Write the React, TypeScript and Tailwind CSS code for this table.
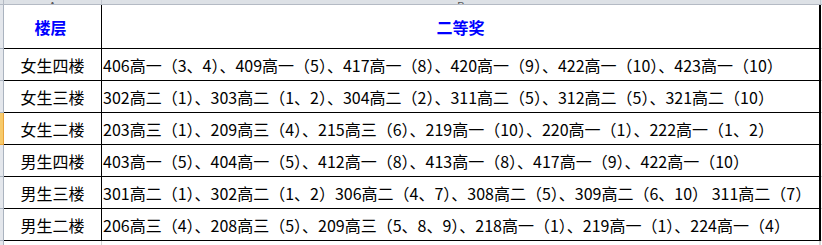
import React from "react";

const rows: { floor: string; text: string; sel?: boolean }[] = [
  { floor: "女生四楼", text: "406高一（3、4）、409高一（5）、417高一（8）、420高一（9）、422高一（10）、423高一（10）" },
  { floor: "女生三楼", text: "302高二（1）、303高二（1、2）、304高二（2）、311高二（5）、312高二（5）、321高二（10）" },
  { floor: "女生二楼", text: "203高三（1）、209高三（4）、215高三（6）、219高一（10）、220高一（1）、222高一（1、2）", sel: true },
  { floor: "男生四楼", text: "403高一（5）、404高一（5）、412高一（8）、413高一（8）、417高一（9）、422高一（10）" },
  { floor: "男生三楼", text: "301高二（1）、302高二（1、2）306高二（4、7）、308高二（5）、309高二（6、10） 311高二（7）" },
  { floor: "男生二楼", text: "206高三（4）、208高三（5）、209高三（5、8、9）、218高一（1）、219高一（1）、224高一（4）" },
];

export default function App() {
  return (
    <div
      className="w-[822px] h-[245px] bg-white overflow-hidden text-black"
      style={{ fontFamily: '"Noto Sans CJK SC", "Noto Sans", sans-serif' }}
    >
      {/* column header strip */}
      <div className="flex h-[5px] bg-[#dde1e6] border-b border-[#b4bac4]">
        <div className="w-[4px] border-r border-[#b4bac4]" />
        <div className="w-[98px] border-r border-[#c2c7cf] flex justify-center items-end overflow-hidden">
          <span className="text-[11px] leading-[11px] mb-[-8px] text-[#555]" style={{ fontFamily: '"Liberation Sans", sans-serif' }}>A</span>
        </div>
        <div className="w-[719px] border-r border-[#c2c7cf] flex justify-center items-end overflow-hidden">
          <span className="text-[11px] leading-[11px] mb-[-8px] text-[#555]" style={{ fontFamily: '"Liberation Sans", sans-serif' }}>B</span>
        </div>
        <div className="flex-1" />
      </div>

      {/* header row */}
      <div className="flex h-[44px]">
        <div className="w-[4px] bg-[#e4e7ec] border-r border-b border-[#aab3bf]" />
        <div className="w-[98px] border-r border-b border-black flex items-center justify-center">
          <span className="text-[16px] font-bold text-[#0000ff] leading-none pt-[1px] pr-[4px]">楼层</span>
        </div>
        <div className="w-[719px] border-r-2 border-b border-black flex items-center justify-center">
          <span className="text-[16px] font-bold text-[#0000ff] leading-none pt-[1px]">二等奖</span>
        </div>
        <div className="flex-1 border-b border-[#d4d4d4]" />
      </div>

      {rows.map((r) => (
        <div key={r.floor} className="flex h-[32px]">
          <div
            className={
              r.sel
                ? "w-[4px] bg-[#f7ca6a] border-r border-b border-[#e8a33c]"
                : "w-[4px] bg-[#e4e7ec] border-r border-b border-[#aab3bf]"
            }
          />
          <div className="w-[98px] border-r border-b border-black flex items-center justify-center">
            <span className="text-[16px] leading-none pt-[1px]">{r.floor}</span>
          </div>
          <div className="w-[719px] border-r-2 border-b border-black flex items-center pl-[1px] overflow-hidden">
            <span className="text-[16px] leading-none pt-[1px] whitespace-pre">{r.text}</span>
          </div>
          <div className="flex-1 border-b border-[#d4d4d4]" />
        </div>
      ))}

      {/* trailing partial row */}
      <div className="flex h-[4px]">
        <div className="w-[4px] bg-[#e4e7ec] border-r border-[#aab3bf]" />
        <div className="w-[98px] border-r border-[#d4d4d4]" />
        <div className="w-[719px] border-r-2 border-[#d4d4d4]" />
        <div className="flex-1" />
      </div>
    </div>
  );
}
